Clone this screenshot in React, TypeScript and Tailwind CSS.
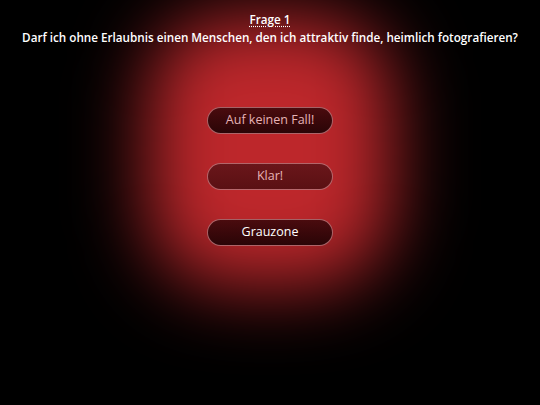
export default function App() {
  const answers = [
    { label: "Auf keinen Fall!", text: "text-[#e6b3b6]" },
    { label: "Klar!", text: "text-[#e6b3b6]" },
    { label: "Grauzone", text: "text-white" },
  ]

  return (
    <main
      className="relative w-[540px] h-[405px] overflow-hidden bg-black"
      style={{ fontFamily: '"Open Sans", "Liberation Sans", sans-serif' }}
    >
      {/* red glow behind content */}
      <div className="absolute left-[148px] top-[15px] w-[244px] h-[272px] rounded-[80px] bg-[#bd272b] blur-[38px]" />

      <div className="relative flex flex-col items-center">
        <div className="mt-[11px] text-[11.7px] leading-[16px] font-semibold text-white underline decoration-dotted underline-offset-2">
          Frage 1
        </div>
        <div className="mt-[2px] text-[11.7px] leading-[16px] font-semibold text-white">
          Darf ich ohne Erlaubnis einen Menschen, den ich attraktiv finde, heimlich fotografieren?
        </div>

        <div className="mt-[62px] flex flex-col gap-[29px]">
          {answers.map((a, i) => (
            <button
              key={a.label}
              className={`w-[126px] h-[27px] rounded-full border border-[#d98a8e]/70 text-[12.5px] ${a.text} ${
                i === 1
                  ? "bg-gradient-to-b from-[#6a161a] to-[#5a1013]"
                  : "bg-gradient-to-b from-[#4a0b0e] to-[#2a0507]"
              }`}
            >
              {a.label}
            </button>
          ))}
        </div>
      </div>
    </main>
  )
}
